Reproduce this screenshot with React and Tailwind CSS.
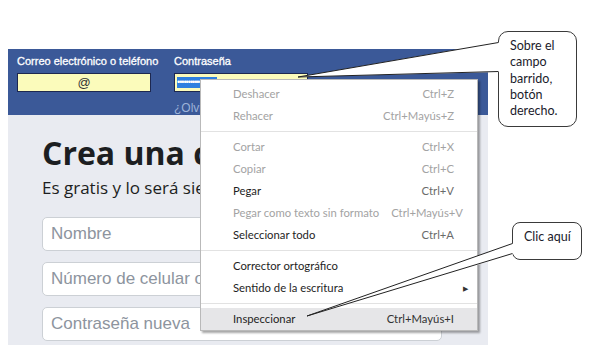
const MENU = [
  { label: 'Deshacer', key: 'Ctrl+Z', off: true },
  { label: 'Rehacer', key: 'Ctrl+Mayús+Z', off: true },
  'sep',
  { label: 'Cortar', key: 'Ctrl+X', off: true },
  { label: 'Copiar', key: 'Ctrl+C', off: true },
  { label: 'Pegar', key: 'Ctrl+V' },
  { label: 'Pegar como texto sin formato', key: 'Ctrl+Mayús+V', off: true },
  { label: 'Seleccionar todo', key: 'Ctrl+A' },
  'sep',
  { label: 'Corrector ortográfico' },
  { label: 'Sentido de la escritura', sub: true },
  'sep',
  { label: 'Inspeccionar', key: 'Ctrl+Mayús+I', hover: true },
]

function ContextMenu() {
  return (
    <div
      className="absolute left-[200px] top-[79px] w-[278px] border border-[#b9b9b9] bg-white pt-[3px] shadow-[2px_2px_2px_rgba(0,0,0,0.35)]"
      style={{ fontFamily: 'Lato, "Noto Sans", sans-serif' }}
    >
      {MENU.map((item, i) =>
        item === 'sep' ? (
          <div key={i} className="flex h-[9px] items-center">
            <div className="h-px w-full bg-[#e2e2e2]" />
          </div>
        ) : (
          <div
            key={i}
            className={`flex h-[22px] items-center justify-between gap-3 whitespace-nowrap pl-[32px] pr-[23px] text-[11.3px] ${
              item.hover ? 'bg-[#e6e6e8]' : ''
            }`}
          >
            <span className={item.off ? 'text-[#a3a3a3]' : 'text-[#1e1e1e]'}>{item.label}</span>
            {item.key && (
              <span className={item.off ? 'text-[#a3a3a3]' : item.hover ? 'text-[#333]' : 'text-[#6a6a6a]'}>
                {item.key}
              </span>
            )}
            {item.sub && <span className="mr-[-14px] text-[7px] text-[#333]">▶</span>}
          </div>
        )
      )}
    </div>
  )
}

function Field({ text, w }) {
  return (
    <div
      className={`flex h-[34px] ${w} items-center whitespace-nowrap rounded-[5px] border border-[#ccd0d5] bg-white px-[8px] text-[17px] text-[#8d949e]`}
      style={{ fontFamily: '"Liberation Sans", Arial, sans-serif' }}
    >
      {text}
    </div>
  )
}

export default function App() {
  return (
    <div className="relative h-[351px] w-[593px] overflow-hidden bg-white">
      <div className="ml-2 mt-[49px] w-[480px]">
        <header
          className="flex h-[66px] gap-[23px] bg-[#3b5998] pl-[9px] pt-[5px] text-[11px]"
          style={{ fontFamily: '"Liberation Sans", Arial, sans-serif' }}
        >
          <div className="w-[134px]">
            <div className="h-[14px] whitespace-nowrap leading-[14px] text-white [-webkit-text-stroke:0.3px_white]">
              Correo electrónico o teléfono
            </div>
            <div className="mt-[5px] flex h-[19px] items-center justify-center border border-[#1d2850] bg-[#fbfbbb] text-[13px] text-[#333]">
              @
            </div>
          </div>
          <div className="w-[134px]">
            <div className="h-[14px] whitespace-nowrap leading-[14px] text-white [-webkit-text-stroke:0.3px_white]">
              Contraseña
            </div>
            <div className="mt-[5px] flex h-[19px] items-center border border-[#1d2850] bg-[#fbfbbb] pl-[2px]">
              <span className="h-[11px] w-[40px] overflow-hidden whitespace-nowrap bg-[#2f80e0] text-[9px] leading-[11px] tracking-[-1px] text-white">
                ••••••••••••
              </span>
            </div>
            <div className="mt-[7px] whitespace-nowrap text-[12px] text-[#9db3d9]">¿Olvidaste tu cuenta?</div>
          </div>
        </header>
        <main
          className="h-[230px] bg-[#e9ebf1] pl-[34px] pt-[22px] text-[#1c1e21]"
          style={{ fontFamily: '"Open Sans", sans-serif' }}
        >
          <h1 className="whitespace-nowrap text-[32px] font-bold leading-[32px]">Crea una cuenta</h1>
          <p className="mt-[8px] whitespace-nowrap text-[17px] leading-[22px]">Es gratis y lo será siempre.</p>
          <div className="mt-[18px] flex flex-col gap-[11px]">
            <div className="flex gap-[12px]">
              <Field text="Nombre" w="w-[194px]" />
              <Field text="Apellido" w="w-[194px]" />
            </div>
            <Field text="Número de celular o correo electrónico" w="w-[400px]" />
            <Field text="Contraseña nueva" w="w-[400px]" />
          </div>
        </main>
      </div>

      <ContextMenu />

      <div
        className="absolute left-[498px] top-[31px] h-[96px] w-[79px] rounded-[10px] border border-[#3a3a3a] bg-white pl-[11px] pt-[6px] text-[12.5px] leading-[16.3px] text-[#1b1b2b]"
        style={{ fontFamily: 'Lato, "Open Sans", sans-serif' }}
      >
        Sobre el
        <br />
        campo
        <br />
        barrido,
        <br />
        botón
        <br />
        derecho.
      </div>
      <div
        className="absolute left-[512px] top-[222px] h-[38px] w-[70px] whitespace-nowrap rounded-[8px] border border-[#3a3a3a] bg-white pl-[11px] pt-[6px] text-[12.5px] leading-[16px] text-[#1b1b2b]"
        style={{ fontFamily: 'Lato, "Open Sans", sans-serif' }}
      >
        Clic aquí
      </div>

      <svg className="pointer-events-none absolute inset-0" width="593" height="351">
        <polygon points="298,77 500,42 500,72" fill="#fff" />
        <polyline points="498.5,42.5 298,77 498.5,71.5" fill="none" stroke="#222" strokeWidth="1" />
        <polygon points="307,316 514,243 514,254" fill="#fff" />
        <polyline points="512.5,243.5 307,316 512.5,253.5" fill="none" stroke="#222" strokeWidth="1" />
      </svg>
    </div>
  )
}
